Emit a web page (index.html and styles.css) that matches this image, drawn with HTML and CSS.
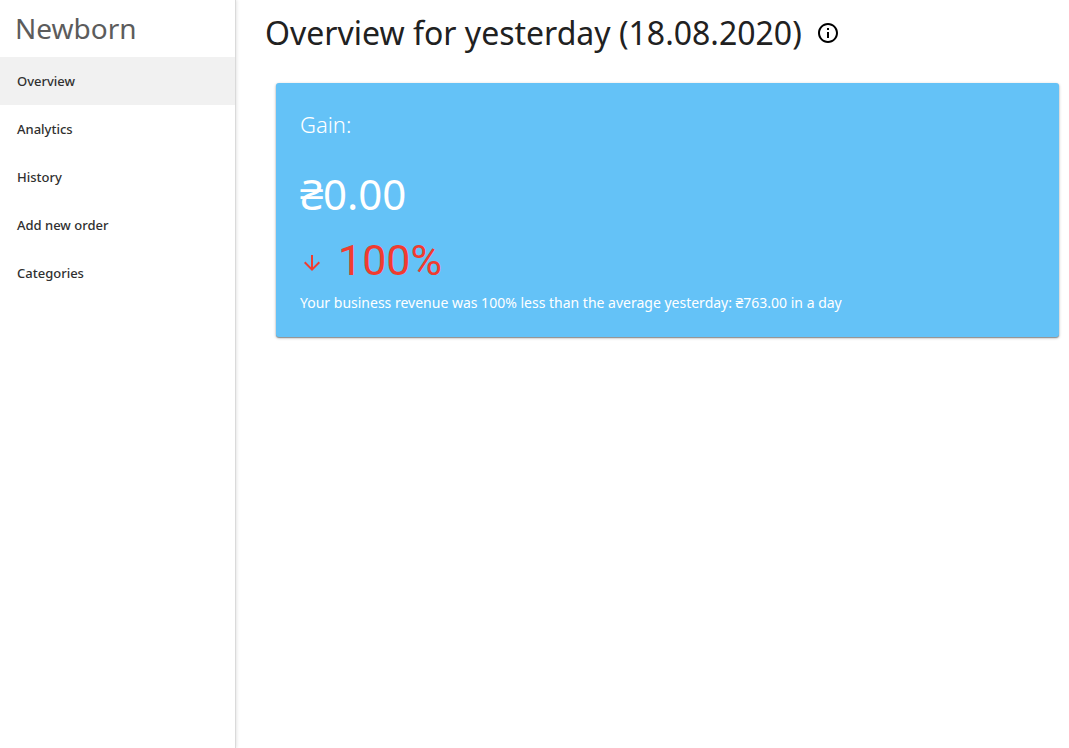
FILE: index.html
```
<!DOCTYPE html>
<html lang="en">
<head>
<meta charset="utf-8">
<title>Newborn</title>
<link rel="stylesheet" href="styles.css">
</head>
<body>
<div class="layout">
  <aside class="sidebar">
    <h2 class="brand">Newborn</h2>
    <nav class="nav">
      <a class="nav-link active" href="#overview" aria-current="page">Overview</a>
      <a class="nav-link" href="#analytics">Analytics</a>
      <a class="nav-link" href="#history">History</a>
      <a class="nav-link" href="#add">Add new order</a>
      <a class="nav-link" href="#categories">Categories</a>
    </nav>
  </aside>
  <main class="content">
    <header class="page-head">
      <h1 class="title">Overview for yesterday (18.08.2020)</h1>
      <svg class="info" viewBox="0 0 24 24" role="img" aria-label="Info"><path d="M11 7h2v2h-2zm0 4h2v6h-2zm1-9C6.48 2 2 6.48 2 12s4.480 10 10 10 10-4.480 10-10S17.520 2 12 2zm0 18c-4.410 0-8-3.590-8-8s3.590-8 8-8 8 3.590 8 8-3.590 8-8 8z"/></svg>
    </header>
    <section class="card">
      <h3 class="label">Gain:</h3>
      <p class="amount">₴0.00</p>
      <p class="change">
        <svg class="arrow" viewBox="0 0 24 24" aria-hidden="true"><path d="M20 12l-1.410-1.410L13 16.170V4h-2v12.170l-5.580-5.590L4 12l8 8 8-8z"/></svg>
        <span>100%</span>
      </p>
      <p class="note">Your business revenue was 100% less than the average yesterday: ₴763.00 in a day</p>
    </section>
  </main>
</div>
</body>
</html>
```
FILE: styles.css
```
* {
  box-sizing: border-box;
}

body {
  margin: 0;
  background: #fff;
  color: #212121;
  font-family: "Noto Sans", "Open Sans", sans-serif;
}

h1, h2, h3, p {
  margin: 0;
}

.layout {
  display: flex;
  min-height: 100vh;
}

.sidebar {
  flex: 0 0 236px;
  border-right: 1px solid #dadada;
  box-shadow: 1px 0 3px rgba(0, 0, 0, 0.1);
}

.brand {
  padding-left: 15px;
  color: #5c5c5c;
  font-size: 28px;
  font-weight: 400;
  line-height: 57px;
}

.nav-link {
  display: block;
  padding-left: 17px;
  color: #303030;
  font-size: 13px;
  font-weight: 500;
  line-height: 48px;
  text-decoration: none;
}

.nav-link.active {
  background: #f1f1f1;
}

.content {
  flex: 1;
  min-width: 0;
  padding: 8px 10px 0 29px;
}

.page-head {
  display: flex;
  align-items: center;
  gap: 14px;
}

.title {
  font-size: 32px;
  font-weight: 400;
  line-height: 50px;
}

.info {
  width: 24px;
  height: 24px;
  fill: #000;
}

.card {
  margin: 25px 0 0 11px;
  padding: 24px;
  border-radius: 3px;
  background: #64c2f7;
  box-shadow: 0 1px 3px rgba(0, 0, 0, 0.3), 0 1px 1px rgba(0, 0, 0, 0.3);
  color: #fff;
}

.label {
  font-size: 22px;
  font-weight: 300;
  line-height: 34px;
}

.amount {
  margin-top: 20px;
  font-size: 42px;
  line-height: 66px;
}

.change {
  display: flex;
  align-items: center;
  gap: 14px;
  color: #f13b30;
  font-family: Roboto, "Noto Sans", sans-serif;
  font-size: 43px;
  font-weight: 400;
  line-height: 66px;
}

.arrow {
  width: 24px;
  height: 24px;
  margin-top: 6px;
  fill: currentColor;
}

.note {
  font-size: 14px;
  line-height: 20px;
}
```
